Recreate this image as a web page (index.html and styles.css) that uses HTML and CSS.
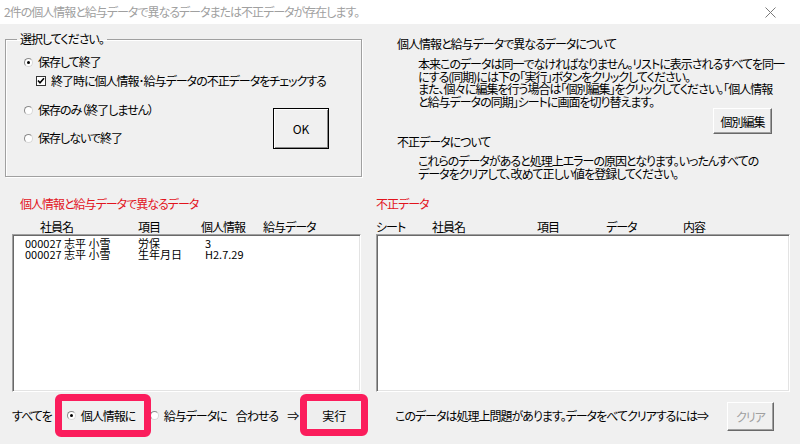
FILE: index.html
```html
<!DOCTYPE html>
<html lang="ja">
<head>
<meta charset="utf-8">
<title>dialog</title>
<link rel="stylesheet" href="styles.css">
</head>
<body>
<div class="titlebar">
  <span class="title">2件の個人情報と給与データで異なるデータまたは不正データが存在します。</span>
  <svg class="close" width="11" height="11" viewBox="0 0 11 11"><path d="M0.5 0.5 L10.5 10.5 M10.5 0.5 L0.5 10.5" stroke="#7a7a7a" stroke-width="1" fill="none"/></svg>
</div>

<div class="top">
  <fieldset class="group">
    <legend>選択してください。</legend>
    <div class="group-body">
      <div class="options">
        <div class="opt"><span class="radio on"></span>保存して終了</div>
        <div class="opt check"><span class="checkbox"><svg width="8" height="8" viewBox="0 0 8 8"><path d="M1 3.5 L3 5.7 L7 1.3" stroke="#000" stroke-width="1.6" fill="none"/></svg></span>終了時に個人情報･給与データの不正データをチェックする</div>
        <div class="opt gap1"><span class="radio"></span>保存のみ（終了しません）</div>
        <div class="opt gap2"><span class="radio"></span>保存しないで終了</div>
      </div>
      <button class="btn ok">OK</button>
    </div>
  </fieldset>

  <div class="info">
    <div class="head">個人情報と給与データで異なるデータについて</div>
    <div class="para">本来このデータは同一でなければなりません。リストに表示されるすべてを同一<br>にする(同期)には下の｢実行｣ボタンをクリックしてください。<br>また、個々に編集を行う場合は｢個別編集｣をクリックしてください。｢個人情報<br>と給与データの同期｣シートに画面を切り替えます。</div>
    <div class="btn-row"><button class="btn kobetsu">個別編集</button></div>
    <div class="head head2">不正データについて</div>
    <div class="para para2">これらのデータがあると処理上エラーの原因となります。いったんすべての<br>データをクリアして、改めて正しい値を登録してください。</div>
  </div>
</div>

<div class="lists">
  <div class="panel panel-left">
    <div class="red">個人情報と給与データで異なるデータ</div>
    <div class="cols cols-left"><span>社員名</span><span>項目</span><span>個人情報</span><span>給与データ</span></div>
    <div class="listbox">
      <div class="rows">
        <span>000027 志平 小雪</span><span>労保</span><span>3</span>
        <span>000027 志平 小雪</span><span>生年月日</span><span>H2.7.29</span>
      </div>
    </div>
  </div>
  <div class="panel panel-right">
    <div class="red red-right">不正データ</div>
    <div class="cols cols-right"><span>シート</span><span>社員名</span><span>項目</span><span>データ</span><span>内容</span></div>
    <div class="listbox"></div>
  </div>
</div>

<div class="bottom">
  <div class="bottom-left">
    <span>すべてを</span>
    <div class="mark mark1"><span class="radio on"></span>個人情報に</div>
    <span class="radio r2"></span><span class="t2">給与データに</span>
    <span class="t3">合わせる</span>
    <span class="t4">⇒</span>
    <div class="mark mark2"><button class="exec">実行</button></div>
  </div>
  <div class="bottom-right">
    <span>このデータは処理上問題があります。データをべてクリアするには⇒</span>
    <button class="btn clear" disabled>クリア</button>
  </div>
</div>
</body>
</html>
```

FILE: styles.css
```css
html, body {
  margin: 0;
  padding: 0;
}
body {
  width: 800px;
  height: 444px;
  overflow: hidden;
  background: #f0f0f0;
  font-family: "Noto Sans CJK JP", "Noto Sans", sans-serif;
  font-size: 12px;
  letter-spacing: -1px;
  color: #000;
  font-feature-settings: "palt";
}

.titlebar {
  height: 24px;
  background: #fff;
  display: flex;
  align-items: center;
  justify-content: space-between;
  padding: 0 24px 0 4px;
}
.title {
  color: #a0a0a0;
  line-height: 14px;
  white-space: nowrap;
}
.close { display: block; }

.top {
  display: flex;
  align-items: flex-start;
  height: 156px;
}
.group {
  flex: none;
  margin: 8px 0 0 5px;
  padding: 0;
  width: 357px;
  height: 145px;
  box-sizing: border-box;
  border: 1px solid #a0a0a0;
  box-shadow: inset 1px 1px 0 #fff, 1px 1px 0 #fff;
  min-width: 0;
}
.group legend {
  margin-left: 11px;
  padding: 0 3px;
  line-height: 14px;
}
.group-body {
  display: flex;
  align-items: flex-start;
}
.options {
  flex: 1;
  min-width: 0;
  padding: 8px 0 0 18px;
}
.opt {
  display: flex;
  align-items: center;
  height: 16px;
  line-height: 16px;
  white-space: nowrap;
}
.opt.check { margin-top: 3px; margin-left: 12px; }
.opt.gap1 { margin-top: 13px; }
.opt.gap2 { margin-top: 12px; }

.radio {
  display: inline-block;
  position: relative;
  width: 9px;
  height: 9px;
  box-sizing: border-box;
  border-radius: 50%;
  background: #fff;
  border: 1px solid;
  border-color: #8a8a8a #d8d8d8 #d8d8d8 #8a8a8a;
  margin-right: 5px;
  flex: none;
}
.radio.on::after {
  content: "";
  position: absolute;
  left: 2px;
  top: 2px;
  width: 3px;
  height: 3px;
  border-radius: 50%;
  background: #000;
}
.checkbox {
  display: inline-flex;
  align-items: center;
  justify-content: center;
  width: 10px;
  height: 10px;
  box-sizing: border-box;
  background: #fff;
  border: 1px solid #333;
  margin-right: 5px;
  flex: none;
}
.checkbox svg { display: block; }

.btn {
  font-family: inherit;
  font-size: 12px;
  letter-spacing: inherit;
  font-feature-settings: "palt";
  padding: 0;
  background: #f0f0f0;
  color: #000;
  border: 1px solid;
  border-color: #fff #696969 #696969 #fff;
  box-shadow: inset -1px -1px 0 #a0a0a0;
  box-sizing: border-box;
  flex: none;
}
.ok {
  width: 56px;
  height: 41px;
  margin: 62px 32px 0 0;
  letter-spacing: 0;
  border: 1px solid #000;
  box-shadow: inset 1px 1px 0 #fff, inset -1px -1px 0 #8a8a8a;
}

.info {
  flex: 1;
  min-width: 0;
  margin-left: 35px;
  padding: 13px 28px 0 0;
}
.head {
  line-height: 14px;
  white-space: nowrap;
}
.head2 { margin-top: 1px; }
.para {
  margin: 7px 0 0 21px;
  line-height: 12.5px;
  white-space: nowrap;
}
.para2 { margin-top: 6px; }
.btn-row {
  display: flex;
  justify-content: flex-end;
}
.kobetsu {
  width: 59px;
  height: 26px;
}

.lists {
  display: flex;
  padding-top: 17px;
}
.panel-left {
  flex: none;
  margin-left: 12px;
  width: 349px;
}
.panel-right {
  flex: none;
  margin-left: 15px;
  width: 414px;
}
.red {
  color: #e2141d;
  line-height: 14px;
  margin-bottom: 8px;
  padding-left: 8px;
  white-space: nowrap;
}
.red-right { padding-left: 0; }
.cols {
  display: grid;
  line-height: 15px;
  white-space: nowrap;
}
.cols-left {
  padding-left: 28px;
  grid-template-columns: 98px 63px 62px auto;
}
.cols-right {
  grid-template-columns: 56px 105px 69px 77px auto;
}
.listbox {
  height: 158px;
  box-sizing: border-box;
  background: #fff;
  border: 1px solid;
  border-color: #a0a0a0 #fff #fff #a0a0a0;
  box-shadow: inset 1px 1px 0 #696969, inset -1px -1px 0 #e3e3e3;
}
.rows {
  display: grid;
  grid-template-columns: 113px 67px auto;
  padding: 3px 0 0 12px;
  font-size: 11px;
  line-height: 11px;
  letter-spacing: 0;
  white-space: pre;
  font-feature-settings: normal;
}

.bottom {
  display: flex;
  align-items: center;
  height: 46px;
}
.bottom-left {
  flex: none;
  display: flex;
  align-items: center;
  margin-left: 12px;
  width: 360px;
  white-space: nowrap;
}
.mark {
  border: 7px solid #fb1d5c;
  border-radius: 6px;
  box-sizing: border-box;
  position: relative;
  z-index: 1;
}
.mark1 {
  margin-left: 3px;
  width: 96px;
  height: 43px;
  display: flex;
  align-items: center;
  padding-left: 5px;
  background: #f0f0f0;
}
.mark1 .radio { margin-right: 5px; }
.r2 { margin-left: -1px; margin-right: 5px; }
.t3 { margin-left: 9px; }
.t4 { margin-left: 9px; letter-spacing: 0; }
.mark2 {
  margin-left: 1px;
  width: 68px;
  height: 42px;
  display: flex;
  background: #f0f0f0;
  padding: 1px;
}
.exec {
  flex: 1;
  font-family: inherit;
  font-size: 12px;
  letter-spacing: 0;
  border: none;
  background: #eeeeee;
  padding: 0;
  color: #000;
}
.bottom-right {
  flex: 1;
  min-width: 0;
  display: flex;
  align-items: center;
  margin-left: 23px;
  padding-right: 26px;
  white-space: nowrap;
}
.clear {
  margin-left: auto;
  width: 47px;
  height: 29px;
  color: #a0a0a0;
  margin-top: 3px;
}
```
